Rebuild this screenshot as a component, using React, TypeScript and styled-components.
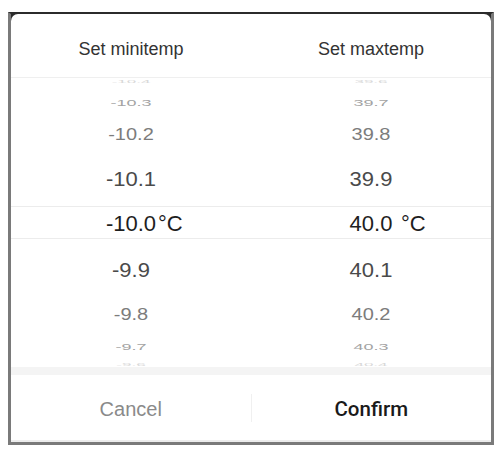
import * as React from 'react';
import styled, { createGlobalStyle } from 'styled-components';

const GlobalStyle = createGlobalStyle`
	html, body {
		margin: 0;
		padding: 0;
		background: #ffffff;
		font-family: "Liberation Sans", Arial, sans-serif;
	}
`;

const Frame = styled.div`
	box-sizing: border-box;
	margin: 12px 0 0 8px;
	width: 486px;
	height: 433px;
	border: 3px solid #7a7a7a;
	border-top: 2px solid #2b2b2b;
	background: #2b2b2b;
`;

const Sheet = styled.div`
	box-sizing: border-box;
	height: 100%;
	background: #ffffff;
	border-radius: 7px 7px 0 0;
	border-bottom: 2px solid #ececec;
	display: flex;
	flex-direction: column;
`;

const Header = styled.div`
	height: 64px;
	padding-top: 7px;
	box-sizing: border-box;
	display: flex;
	border-bottom: 1px solid #efefef;
`;

const Title = styled.div`
	flex: 1;
	display: flex;
	align-items: center;
	justify-content: center;
	font-size: 18px;
	color: #333333;
`;

const Wheels = styled.div`
	height: 289px;
	display: flex;
`;

const Wheel = styled.div`
	flex: 1;
	display: flex;
	flex-direction: column;
	overflow: hidden;
`;

const Item = styled.div<{ $h: number; $selected?: boolean }>`
	position: relative;
	box-sizing: border-box;
	height: ${p => p.$h}px;
	padding-top: ${p => (p.$h > 20 ? 3 : 0)}px;
	flex: none;
	display: flex;
	align-items: center;
	justify-content: center;
	border-top: ${p => (p.$selected ? '1px solid #ececec' : 'none')};
	border-bottom: ${p => (p.$selected ? '1px solid #ececec' : 'none')};
`;

const Value = styled.span<{ $size: number; $scale: number; $color: string }>`
	display: inline-block;
	font-size: ${p => p.$size}px;
	line-height: 1;
	color: ${p => p.$color};
	transform: scaleY(${p => p.$scale});
	white-space: nowrap;
`;

const Unit = styled.span<{ $offset: number }>`
	position: absolute;
	left: calc(50% + ${p => p.$offset}px);
	top: calc(50% + 1.5px);
	transform: translateY(-50%);
	font-size: 22px;
	line-height: 1;
	color: #1e1e1e;
`;

const Gap = styled.div`
	height: 8px;
	background: #f4f4f4;
`;

const Footer = styled.div`
	flex: 1;
	display: flex;
	align-items: center;
`;

const Action = styled.div<{ $primary?: boolean }>`
	flex: 1;
	display: flex;
	align-items: center;
	justify-content: center;
	height: 100%;
	padding-top: 3px;
	box-sizing: border-box;
	font-family: ${p => (p.$primary ? 'Roboto, "Liberation Sans", sans-serif' : 'inherit')};
	font-size: ${p => (p.$primary ? '20.5px' : '20px')};
	font-weight: ${p => (p.$primary ? 500 : 400)};
	color: ${p => (p.$primary ? '#1a1a1a' : '#8a8a8a')};
`;

const Separator = styled.div`
	width: 1px;
	height: 28px;
	background: #f0f0f0;
`;

// row look by distance from the selected value
const LEVELS: { h: number; size: number; scale: number; color: string }[] = [
	{ h: 7, size: 17, scale: 0.25, color: '#d8d8d8' },
	{ h: 33, size: 18, scale: 0.55, color: '#a3a3a3' },
	{ h: 31, size: 20, scale: 0.78, color: '#7c7c7c' },
	{ h: 57, size: 22, scale: 0.95, color: '#4a4a4a' },
	{ h: 33, size: 22, scale: 1, color: '#1e1e1e' },
	{ h: 58, size: 22, scale: 0.95, color: '#4a4a4a' },
	{ h: 32, size: 20, scale: 0.78, color: '#7c7c7c' },
	{ h: 32, size: 18, scale: 0.55, color: '#a3a3a3' },
	{ h: 6, size: 17, scale: 0.25, color: '#d8d8d8' },
];

interface WheelProps {
	center: number;
	unitOffset: number;
}

const TempWheel = ({ center, unitOffset }: WheelProps) => (
	<Wheel>
		{LEVELS.map((lvl, i) => {
			const value = (center + (i - 4) * 0.1).toFixed(1);
			const selected = i === 4;
			return (
				<Item key={i} $h={lvl.h} $selected={selected}>
					<Value $size={lvl.size} $scale={lvl.scale} $color={lvl.color}>{value}</Value>
					{selected && <Unit $offset={unitOffset}>°C</Unit>}
				</Item>
			);
		})}
	</Wheel>
);

export default function App() {
	return (
		<>
			<GlobalStyle />
			<Frame>
				<Sheet>
					<Header>
						<Title>Set minitemp</Title>
						<Title>Set maxtemp</Title>
					</Header>
					<Wheels>
						<TempWheel center={-10.0} unitOffset={27} />
						<TempWheel center={40.0} unitOffset={30} />
					</Wheels>
					<Gap />
					<Footer>
						<Action>Cancel</Action>
						<Separator />
						<Action $primary>Confirm</Action>
					</Footer>
				</Sheet>
			</Frame>
		</>
	);
}
